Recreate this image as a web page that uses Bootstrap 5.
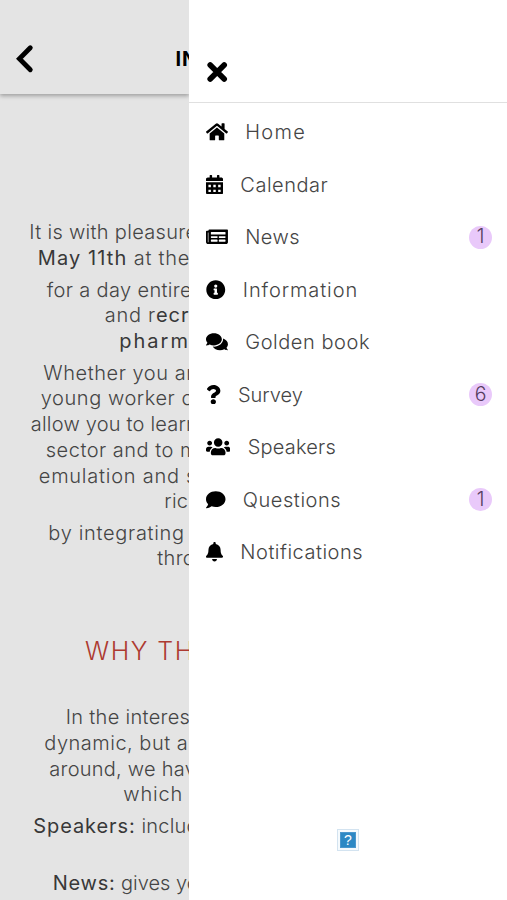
<!DOCTYPE html>
<html lang="en">
<head>
<meta charset="utf-8">
<meta name="viewport" content="width=device-width, initial-scale=1">
<title>Event menu</title>
<link href="https://cdn.jsdelivr.net/npm/bootstrap@5.3.0/dist/css/bootstrap.min.css" rel="stylesheet">
<style>
body{font-family:Inter,"Open Sans",sans-serif;font-weight:300;font-size:20px;background:#fff;color:#454545}
.page-pane{width:189px;background:#e4e4e4}
.page-bar{height:94px;padding:24px 0 0 14px;box-shadow:0 2px 4px rgba(0,0,0,.3);color:#000}
.page-title{font-weight:700;font-size:20px;margin-left:140.5px;letter-spacing:.8px}
.story{padding-top:126.4px;line-height:25.75px}
.story p{margin-bottom:5.7px}
.story p>span{display:block;padding-left:var(--x);margin-left:.8px;letter-spacing:var(--s)}
.story b{font-weight:400;color:#383838}
.story h2{margin:65.8px 0 41px;padding-left:85px;font-size:25px;font-weight:300;line-height:26px;letter-spacing:1.5px;color:#ad3a30}
.drawer-top{height:103px;padding:61px 0 0 17px;border-bottom:1px solid #e0e0e0}
.drawer-top svg{display:block}
.menu-list{padding-top:2.8px}
.menu-row{height:52.53px;padding:0 15px 0 17px;letter-spacing:var(--s)}
.menu-row>svg{height:19.5px;margin-right:17.3px;fill:#000}
.count{width:23px;height:23px;background:#e9c9fa;color:#553c60;letter-spacing:0;font-size:19.5px}
.missing{width:22px;height:22px;margin:250.300px 0 0 148px}
</style>
<script src="https://cdn.jsdelivr.net/npm/bootstrap@5.3.0/dist/js/bootstrap.bundle.min.js"></script>
</head>
<body>
<div class="d-flex vh-100 overflow-hidden">
<main class="page-pane flex-shrink-0 overflow-hidden text-nowrap">
  <header class="page-bar d-flex align-items-center">
    <svg class="flex-shrink-0" width="21" height="32" viewBox="0 0 21 32" fill="none" stroke="#000" stroke-width="4.800" stroke-linecap="round"><path d="M16.300 4.800 5.400 15.800 16.300 26.800"/></svg>
    <span class="page-title">IN</span>
  </header>
  <section class="story">
    <p><span style="--x:28.500px;--s:.31px">It is with pleasure</span><span style="--x:37px;--s:.75px"><b style="letter-spacing:1.1px">May 11th</b> at the</span></p>
    <p><span style="--x:46px;--s:.35px">for a day entire</span><span style="--x:104px;--s:.7px">and r<b style="letter-spacing:1px">ecr</b></span><span style="--x:118.500px;--s:2px"><b>pharm</b></span></p>
    <p><span style="--x:42.500px;--s:.55px">Whether you ar</span><span style="--x:40px;--s:.55px">young worker o</span><span style="--x:30px;--s:.2px">allow you to learn</span><span style="--x:45px;--s:.5px">sector and to m</span><span style="--x:38px;--s:.75px">emulation and s</span><span style="--x:163.500px;--s:.2px">ric</span></p>
    <p><span style="--x:47.500px;--s:.68px">by integrating</span><span style="--x:156.500px;--s:.3px">thro</span></p>
    <h2>WHY TH</h2>
    <p><span style="--x:65px;--s:.3px">In the interes</span><span style="--x:43.500px;--s:.5px">dynamic, but a</span><span style="--x:48.500px;--s:.25px">around, we hav</span><span style="--x:122.500px;--s:.85px">which</span></p>
    <p class="pb-4 mb-0"><span style="--x:32.500px;--s:.2px"><b style="letter-spacing:.9px">Speakers:</b> includ</span></p>
    <p class="pt-2"><span style="--x:52px;--s:0px"><b style="letter-spacing:.7px">News:</b> gives yo</span></p>
  </section>
</main>
<aside class="flex-grow-1 bg-white">
  <div class="drawer-top">
    <svg width="22" height="22" viewBox="0 0 22 22" stroke="#000" stroke-width="5.6" stroke-linecap="round"><path d="M4.200 4 18.200 18M18.200 4 4.200 18"/></svg>
  </div>
  <nav class="menu-list">
    <div class="menu-row d-flex align-items-center" style="--s:1.3px"><svg viewBox="0 0 576 512"><path d="M280.370 148.260L96 300.110V464a16 16 0 0 0 16 16l112.060-.29a16 16 0 0 0 15.920-16V368a16 16 0 0 1 16-16h64a16 16 0 0 1 16 16v95.640a16 16 0 0 0 16 16.050L464 480a16 16 0 0 0 16-16V300L295.670 148.260a12.190 12.190 0 0 0-15.300 0zM571.600 251.470L488 182.560V44.050a12 12 0 0 0-12-12h-56a12 12 0 0 0-12 12v72.610L318.470 43a48 48 0 0 0-61 0L4.340 251.470a12 12 0 0 0-1.600 16.900l25.500 31A12 12 0 0 0 45.150 301l235.220-193.740a12.190 12.190 0 0 1 15.300 0L530.900 301a12 12 0 0 0 16.900-1.600l25.500-31a12 12 0 0 0-1.700-16.930z"/></svg>Home</div>
    <div class="menu-row d-flex align-items-center" style="--s:.5px"><svg viewBox="0 0 448 512"><path fill-rule="evenodd" d="M0 464c0 26.500 21.500 48 48 48h352c26.500 0 48-21.500 48-48V192H0zM64 256h64v64H64zm128 0h64v64h-64zm128 0h64v64h-64zM64 384h64v64H64zm128 0h64v64h-64zm128 0h64v64h-64zM400 64h-48V16c0-8.800-7.200-16-16-16h-32c-8.800 0-16 7.200-16 16v48H160V16c0-8.800-7.200-16-16-16h-32c-8.800 0-16 7.200-16 16v48H48C21.500 64 0 85.500 0 112v48h448v-48c0-26.500-21.500-48-48-48z"/></svg>Calendar</div>
    <div class="menu-row d-flex align-items-center" style="--s:.4px"><svg viewBox="0 0 576 512"><path fill-rule="evenodd" d="M552 64H88c-13.255 0-24 10.745-24 24v8H24c-13.255 0-24 10.745-24 24v272c0 30.928 25.072 56 56 56h472c26.510 0 48-21.490 48-48V88c0-13.255-10.745-24-24-24zM56 400a8 8 0 0 1-8-8V144h16v248a8 8 0 0 1-8 8zM140 384a12 12 0 0 1-12-12v-32a12 12 0 0 1 12-12h152a12 12 0 0 1 12 12v32a12 12 0 0 1-12 12zM348 384a12 12 0 0 1-12-12v-32a12 12 0 0 1 12-12h152a12 12 0 0 1 12 12v32a12 12 0 0 1-12 12zM140 288a12 12 0 0 1-12-12v-24a12 12 0 0 1 12-12h152a12 12 0 0 1 12 12v24a12 12 0 0 1-12 12zM348 288a12 12 0 0 1-12-12v-24a12 12 0 0 1 12-12h152a12 12 0 0 1 12 12v24a12 12 0 0 1-12 12zM140 200a12 12 0 0 1-12-12v-48a12 12 0 0 1 12-12h360a12 12 0 0 1 12 12v48a12 12 0 0 1-12 12z"/></svg>News<span class="count rounded-circle ms-auto d-flex align-items-center justify-content-center">1</span></div>
    <div class="menu-row d-flex align-items-center" style="--s:.9px"><svg viewBox="0 0 512 512"><path d="M256 8C119.043 8 8 119.083 8 256c0 136.997 111.043 248 248 248s248-111.003 248-248C504 119.083 392.957 8 256 8zm0 110c23.196 0 42 18.804 42 42s-18.804 42-42 42-42-18.804-42-42 18.804-42 42-42zm56 254c0 6.627-5.373 12-12 12h-88c-6.627 0-12-5.373-12-12v-24c0-6.627 5.373-12 12-12h12v-64h-12c-6.627 0-12-5.373-12-12v-24c0-6.627 5.373-12 12-12h64c6.627 0 12 5.373 12 12v100h12c6.627 0 12 5.373 12 12v24z"/></svg>Information</div>
    <div class="menu-row d-flex align-items-center" style="--s:.55px"><svg viewBox="0 0 576 512"><path d="M416 192c0-88.400-93.100-160-208-160S0 103.600 0 192c0 34.300 14.100 65.900 38 92-13.400 30.200-35.500 54.200-35.800 54.500-2.200 2.300-2.800 5.700-1.500 8.700S4.800 352 8 352c36.600 0 66.900-12.300 88.700-25 32.200 15.700 70.300 25 111.300 25 114.900 0 208-71.600 208-160zm122 220c23.900-26 38-57.700 38-92 0-66.900-53.500-124.200-129.300-148.100.9 6.600 1.300 13.300 1.300 20.100 0 105.900-107.700 192-240 192-10.800 0-21.300-.8-31.700-1.900C207.800 439.600 281.800 480 368 480c41 0 79.100-9.200 111.300-25 21.800 12.700 52.100 25 88.700 25 3.200 0 6.100-1.900 7.300-4.800 1.300-2.900.7-6.300-1.500-8.700-.3-.3-22.400-24.200-35.800-54.500z"/></svg>Golden book</div>
    <div class="menu-row d-flex align-items-center" style="--s:0px"><svg viewBox="0 0 384 512"><path d="M202.021 0C122.202 0 70.503 32.703 29.914 91.026c-7.363 10.580-5.093 25.086 5.178 32.874l43.138 32.709c10.373 7.865 25.132 6.026 33.253-4.148 25.049-31.381 43.630-49.449 82.757-49.449 30.764 0 68.816 19.799 68.816 49.631 0 22.552-18.617 34.134-48.993 51.164-35.423 19.860-82.299 44.576-82.299 106.405V320c0 13.255 10.745 24 24 24h72.471c13.255 0 24-10.745 24-24v-5.773c0-42.860 125.268-44.645 125.268-160.627C377.504 66.256 286.902 0 202.021 0zM192 373.459c-38.196 0-69.271 31.075-69.271 69.271 0 38.195 31.075 69.270 69.271 69.270s69.271-31.075 69.271-69.271-31.075-69.270-69.271-69.270z"/></svg>Survey<span class="count rounded-circle ms-auto d-flex align-items-center justify-content-center">6</span></div>
    <div class="menu-row d-flex align-items-center" style="--s:.2px"><svg viewBox="0 0 640 512"><path d="M96 224c35.300 0 64-28.700 64-64s-28.700-64-64-64-64 28.700-64 64 28.700 64 64 64zm448 0c35.300 0 64-28.700 64-64s-28.700-64-64-64-64 28.700-64 64 28.700 64 64 64zm32 32h-64c-17.600 0-33.500 7.100-45.100 18.600 40.300 22.100 68.900 62 75.100 109.400h66c17.700 0 32-14.300 32-32v-32c0-35.300-28.700-64-64-64zm-256 0c61.900 0 112-50.100 112-112S381.900 32 320 32 208 82.100 208 144s50.100 112 112 112zm76.800 32h-8.300c-20.800 10-43.900 16-68.500 16s-47.600-6-68.500-16h-8.300C179.600 288 128 339.600 128 403.200V432c0 26.500 21.500 48 48 48h288c26.500 0 48-21.500 48-48v-28.800c0-63.600-51.600-115.200-115.200-115.200zm-223.700-13.400C161.500 263.100 145.600 256 128 256H64c-35.300 0-64 28.700-64 64v32c0 17.700 14.300 32 32 32h65.900c6.300-47.400 34.900-87.300 75.200-109.400z"/></svg>Speakers</div>
    <div class="menu-row d-flex align-items-center" style="--s:.55px"><svg viewBox="0 0 512 512"><path d="M256 32C114.600 32 0 125.100 0 240c0 49.600 21.400 95 57 130.700C44.500 421.100 2.700 466 2.200 466.500c-2.200 2.300-2.800 5.700-1.500 8.700S4.800 480 8 480c66.300 0 116-31.800 140.600-51.400 32.700 12.300 69 19.400 107.400 19.400 141.400 0 256-93.100 256-208S397.400 32 256 32z"/></svg>Questions<span class="count rounded-circle ms-auto d-flex align-items-center justify-content-center">1</span></div>
    <div class="menu-row d-flex align-items-center" style="--s:.5px"><svg viewBox="0 0 448 512"><path d="M224 512c35.320 0 63.970-28.650 63.970-64H160.030c0 35.350 28.650 64 63.970 64zm215.390-149.710c-19.320-20.760-55.470-51.990-55.470-154.290 0-77.700-54.480-139.900-127.940-155.160V32c0-17.670-14.320-32-31.980-32s-31.980 14.330-31.980 32v20.840C118.560 68.100 64.080 130.300 64.080 208c0 102.300-36.150 133.530-55.470 154.290-6 6.450-8.660 14.160-8.610 21.710.11 16.400 12.980 32 32.100 32h383.800c19.120 0 32-15.600 32.100-32 .05-7.550-2.610-15.270-8.610-21.710z"/></svg>Notifications</div>
  </nav>
  <svg class="missing d-block" viewBox="0 0 22 22"><rect x=".5" y=".5" width="21" height="21" fill="#f5fafd" stroke="#d3e3f0"/><rect x="3.500" y="3.500" width="15" height="15" fill="#2c88c4" stroke="#4a97cd"/><text x="11" y="16" text-anchor="middle" font-family="Liberation Sans,sans-serif" font-size="14" fill="#fff">?</text></svg>
</aside>
</div>
</body>
</html>
